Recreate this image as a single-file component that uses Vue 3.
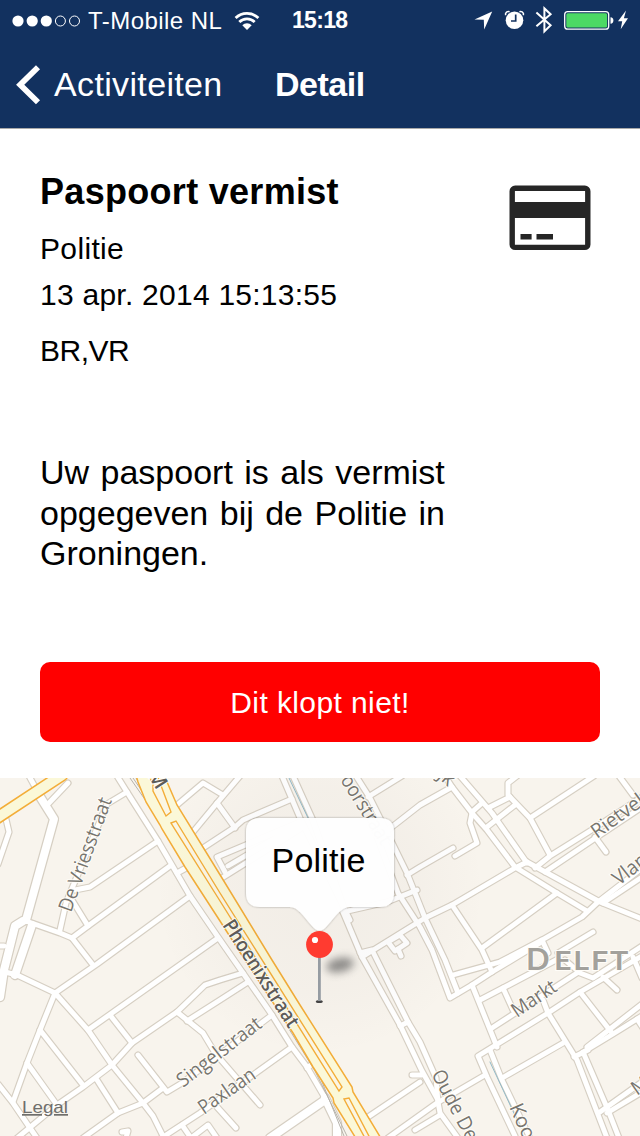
<script setup>
const wideRoads = [
  'M39 795L54 819L26 920',
  'M23 921L15 926L4 970L0 997',
  'M32 925L15 975',
  'M270 1138L325 1100',
  'M325 1098L337 1123V1140'
]

const roads = [
  'M29 776L40 796', 'M49 803L68 783', 'M5 815L9 832L-2 864', 'M-2 946H4',
  'M23 920L60 933L72 938L93 965', 'M72 938L88 926L170 866', 'M88 926L72 900',
  'M60 930L66 903L107 804L127 792', 'M75 890L90 887L158 841',
  'M117 776L127 792L158 841L190 896L218 937L243 973L272 1015L292 1047L307 1067L325 1098',
  'M177 873L188 867', 'M307 1068L315 1062',
  'M5 972L17 975L55 993L40 1030L27 1063L13 1102', 'M55 993L97 964L190 896',
  'M-2 1084L13 1103L30 1128L37 1138',
  'M16 1139L57 1105L83 1087L112 1065L132 1043L177 1012L205 985L220 980L243 973',
  'M55 993L88 1030L112 1065L143 1103L153 1116L164 1138',
  'M88 1030L218 938', 'M40 1030L83 1085', 'M27 1063L57 1105',
  'M110 1015L132 1043', 'M97 1080L118 1113', 'M83 1138L118 1113L143 1103L163 1088',
  'M138 1055L167 1092L182 1083L272 1015', 'M187 1021L220 1000L248 982',
  'M177 1012L203 1033L215 1053L260 1105', 'M160 1139L200 1113L292 1047',
  'M217 1107L236 1128', 'M182 1125L191 1138L208 1125L217 1138', 'M122 1132L128 1131L126 1138',
  'M177 805L203 783L223 795', 'M193 832L217 803L240 776', 'M217 803L235 828',
  'M203 848L235 827L243 820L292 799', 'M222 878L300 829', 'M300 822L217 857L225 872',
  'M228 866L300 824', 'M282 776L300 818L350 920', 'M293 776L312 818L343 905',
  'M343 912L362 957L400 1025L422 1071L438 1100',
  'M360 953L372 950L408 1022L420 1042L436 1078L438 1102L440 1113L458 1138', 'M400 1026L408 1022',
  'M368 1117L420 1082', 'M388 1138L437 1103L485 1075', 'M415 1130L440 1115', 'M412 1075H422',
  'M356 776L370 798L380 818L407 873L425 918L445 960L458 993',
  'M370 818L398 893L420 927L432 950L450 998L472 985L492 972L540 943',
  'M368 797L402 776', 'M388 830L420 805L452 787', 'M407 875L420 867L453 848',
  'M343 912L387 902L417 890', 'M362 957L425 918L452 905L515 868L527 862',
  'M388 942L400 935L407 943L395 951L388 942', 'M398 949L401 956',
  'M445 776L452 787L472 813L487 830L515 867', 'M460 776L492 813L527 863',
  'M472 812L481 804', 'M488 808L510 797', 'M487 827L515 805',
  'M517 776L508 783V795L530 818L550 855', 'M530 818L594 776',
  'M472 813L470 823L477 843L455 856', 'M535 868L550 856L590 831L642 797',
  'M545 872L597 837L642 807', 'M619 776L633 795', 'M595 837L606 852',
  'M527 862L600 902L642 919', 'M515 867L557 893L587 911', 'M557 893L482 948',
  'M452 905L482 950L492 972', 'M642 868L598 902L582 917L542 940L500 962L453 975',
  'M603 903L642 877', 'M542 940L548 953', 'M593 932L558 953',
  'M472 985L497 1047', 'M480 1000L503 988L558 959', 'M503 988L513 1010',
  'M492 1028L577 973', 'M515 1136L487 1077L478 1056L548 1013L580 992L642 956',
  'M490 1050L502 1080L530 1138', 'M502 1078L563 1043',
  'M543 1000L548 1013L577 1060L607 1138', 'M583 1052L608 1110L619 1138',
  'M574 1057L588 1050', 'M587 1047L642 1004', 'M585 1051L613 1034L642 1016',
  'M580 992L612 1033', 'M603 977L617 990', 'M565 960L580 973L593 978L642 946',
  'M633 957L642 978', 'M600 1112L642 1082', 'M607 1113L642 1092', 'M637 1019L643 1028'
]

const labels = [
  { t: 'De Vriesstraat', x: 71, y: 913, r: -70, w: 120 },
  { t: 'Singelstraat', x: 183, y: 1088, r: -37.5, w: 101 },
  { t: 'Paxlaan', x: 204, y: 1115, r: -35, w: 65 },
  { t: 'Rietveld', x: 597, y: 839, r: -36, w: 72 },
  { t: 'Vlam', x: 619, y: 886, r: -38, w: 44 },
  { t: 'Markt', x: 517, y: 1018, r: -34, w: 50 },
  { t: 'Oude De', x: 431, y: 1074, r: 62, w: 77 },
  { t: 'Koo', x: 509, y: 1107, r: 66, w: 37 },
  { t: 'M', x: 637, y: 1096, r: -35, w: 17 },
  { t: 'oorstraat', x: 340, y: 780, r: 58, w: 78 },
  { t: 'jk', x: 437, y: 777, r: 42, w: 15 }
]
</script>

<template>
  <main class="screen">
    <header class="top">
      <div class="status">
        <svg class="signal" width="70" height="14" viewBox="0 0 70 14">
          <g fill="#fff"><circle cx="6" cy="7" r="5.6" /><circle cx="20.2" cy="7" r="5.6" /><circle cx="34.3" cy="7" r="5.6" /></g>
          <g fill="none" stroke="#fff"><circle cx="48.4" cy="7" r="5" /><circle cx="62.5" cy="7" r="5" /></g>
        </svg>
        <span class="carrier">T-Mobile NL</span>
        <svg class="wifi" width="26" height="20" viewBox="0 0 26 20">
          <g fill="none" stroke="#fff" stroke-width="2.8">
            <path d="M1.6 7.1A16.2 16.2 0 0 1 24.4 7.1" />
            <path d="M5.3 11.1A10.8 10.8 0 0 1 20.7 11.1" />
          </g>
          <path d="M8.3 14.2A6.7 6.7 0 0 1 17.7 14.2L13 19Z" fill="#fff" />
        </svg>
        <span class="time">15:18</span>
        <svg class="indicators" width="158" height="30" viewBox="0 0 158 30">
          <path d="M.5 15.6L18.2 7.5L10.2 25.4L9.8 15.8Z" fill="#fff" />
          <circle cx="40.5" cy="16.3" r="8.8" fill="#fff" />
          <path d="M31.6 11.2V9.4Q33 7 35.6 7.7M49.4 11.2V9.4Q48 7 45.4 7.7" fill="none" stroke="#fff" stroke-width="1.5" />
          <path d="M41.7 10.6V17H37" fill="none" stroke="#12315f" stroke-width="1.7" />
          <path d="M62.4 8.6L76.6 21.2L70.4 27.4V4.4L76.6 10.2L62.4 22.2" fill="none" stroke="#fff" stroke-width="2" />
          <rect x="90.7" y="7.6" width="44" height="17.6" rx="3" fill="none" stroke="#fff" stroke-width="1.3" />
          <rect x="92.3" y="9.2" width="40.8" height="14.4" rx="1.5" fill="#4cd964" />
          <path d="M136.5 13.2Q139.4 13.4 139.4 16.4T136.5 19.8Z" fill="#fff" />
          <path d="M152 6.5L144 17.2H148.2L146.7 25.3L154 14.3H149.9Z" fill="#fff" />
        </svg>
      </div>
      <nav class="nav">
        <svg width="25" height="40" viewBox="0 0 25 40"><path d="M22 2.3L4.2 19.8L22 37.3" fill="none" stroke="#fff" stroke-width="5.8" /></svg>
        <span class="back">Activiteiten</span>
        <h1>Detail</h1>
      </nav>
    </header>

    <section class="content">
      <div class="summary">
        <div>
          <h2>Paspoort vermist</h2>
          <p class="org">Politie</p>
          <p class="date">13 apr. 2014 15:13:55</p>
          <p class="codes">BR,VR</p>
        </div>
        <svg class="card" width="82" height="66" viewBox="0 0 82 66">
          <rect x="3.2" y="3.2" width="75.6" height="59.2" rx="3" fill="#fff" stroke="#262626" stroke-width="5.4" />
          <path d="M3 17H79V33H3ZM11.5 49H22.6V54.6H11.5ZM27.5 49H44V54.6H27.5Z" fill="#262626" />
        </svg>
      </div>
      <p class="message">Uw paspoort is als vermist<br />opgegeven bij de Politie in<br />Groningen.</p>
      <button class="deny">Dit klopt niet!</button>
    </section>

    <section class="map">
      <svg width="640" height="358" viewBox="0 778 640 358">
        <defs>
          <radialGradient id="shade">
            <stop offset="0" stop-color="#544" stop-opacity=".04" />
            <stop offset=".6" stop-color="#544" stop-opacity=".025" />
            <stop offset="1" stop-color="#544" stop-opacity="0" />
          </radialGradient>
          <filter id="soft" x="-50%" y="-100%" width="200%" height="300%"><feGaussianBlur stdDeviation="4" /></filter>
          <filter id="edge" x="-10%" y="-10%" width="120%" height="130%"><feDropShadow dx="0" dy="0" stdDeviation=".8" flood-opacity=".35" /></filter>
        </defs>
        <rect y="778" width="640" height="358" fill="#f8f4ed" />

        <g fill="none" stroke-linecap="round" stroke-linejoin="round">
          <g stroke="#d6cfc3">
            <path v-for="d in wideRoads" :key="d" :d="d" stroke-width="10.4" />
            <path v-for="d in roads" :key="d" :d="d" stroke-width="7.2" />
          </g>
          <g stroke="#fff">
            <path v-for="d in wideRoads" :key="d" :d="d" stroke-width="8" />
            <path v-for="d in roads" :key="d" :d="d" stroke-width="4.9" />
          </g>
          <path d="M289 778L309 820M490 1062L519 1124" stroke="#91b9c8" stroke-width="1" />
          <path d="M130 778L146 801M133 778L146 797M136 778L145 793M289 1029L315 1071L347 1136M292 1029L318 1072L344 1136" stroke="#b7b3ab" stroke-width="1" />
          <path d="M-4 818.5L62 775" stroke="#f3ad38" stroke-width="13" />
          <path d="M-4 818.5L62 775" stroke="#fbf8d8" stroke-width="10" />
        </g>
        <path class="highway" d="M136 775L138 782L146 802L160 825L162 829L185 867L220 921L243 957L293 1033L313 1067L333 1098L334 1103L357 1140H382L353 1092L352 1087L300 1005L272 960L222 878L177 805L164 775Z" />
        <path class="median" d="M149 775L153 785L153 791L166 816L171 812L157 775ZM171 823L176 821L220 893L342 1087L339 1091L215 893ZM344 1099L349 1098L371 1140H366Z" />

        <g class="labels">
          <text v-for="l in labels" :key="l.t + l.x" :transform="`translate(${l.x} ${l.y}) rotate(${l.r})`" :textLength="l.w" lengthAdjust="spacingAndGlyphs">{{ l.t }}</text>
          <text class="major" transform="translate(222 925) rotate(57.3)" textLength="124" lengthAdjust="spacingAndGlyphs">Phoenixstraat</text>
          <text class="major" transform="translate(147 775) rotate(57.3)">M</text>
          <text class="city" x="526" y="970">D</text>
          <text class="city small" x="554" y="970" textLength="76" lengthAdjust="spacingAndGlyphs">ELFT</text>
        </g>
        <text class="legal" x="22" y="1113" textLength="46" lengthAdjust="spacingAndGlyphs">Legal</text>

        <circle cx="320" cy="890" r="165" fill="url(#shade)" />
        <ellipse cx="340" cy="965" rx="14" ry="7" transform="rotate(-12 340 965)" fill="#555" opacity=".65" filter="url(#soft)" />
        <ellipse cx="319.3" cy="1001.5" rx="3.5" ry="1.6" fill="#444" />
        <rect x="318" y="955" width="2.8" height="46" fill="#969ca2" />
        <path filter="url(#edge)" fill="#fff" fill-opacity=".975" d="M260 818H380Q394 818 394 832V893Q394 907 380 907H350C341 907 336 916 327 926Q319.5 935 312 926C303 916 298 907 290 907H260Q246 907 246 893V832Q246 818 260 818Z" />
        <text class="callout" x="271.5" y="872" textLength="94">Politie</text>
        <circle cx="319.5" cy="944.5" r="13.4" fill="#ff3b30" />
        <circle cx="315" cy="940" r="3.1" fill="#fff" />
      </svg>
    </section>
  </main>
</template>

<style>
body { margin: 0; }
</style>

<style scoped>
.screen { width: 640px; height: 1136px; overflow: hidden; background: #fff; color: #000; font-family: "Liberation Sans", Arial, sans-serif; }
.top { height: 129px; box-sizing: border-box; background: #12315f; color: #fff; border-bottom: 1px solid #a9a9a9; }
.status { display: flex; align-items: center; height: 41px; padding-left: 12px; white-space: nowrap; }
.signal { flex: none; }
.carrier { width: 146px; margin-left: 6px; font-size: 24px; letter-spacing: .45px; }
.wifi { flex: none; }
.time { width: 182px; margin-left: 32px; font-size: 23px; font-weight: bold; letter-spacing: -.7px; }
.indicators { flex: none; align-self: flex-start; margin-top: 4px; }
.nav { display: flex; align-items: center; height: 87px; padding-left: 16px; }
.back { width: 221px; margin-left: 13px; font-size: 34px; letter-spacing: .35px; }
h1, h2, p { margin: 0; font-weight: normal; }
h1 { font-size: 34px; font-weight: bold; letter-spacing: -.5px; }
.content { display: flex; flex-direction: column; box-sizing: border-box; height: 649px; padding: 40px 40px 36px; }
.summary { display: flex; justify-content: space-between; height: 283px; padding-right: 9px; }
.summary p { font-size: 30px; line-height: 46px; }
h2 { font-size: 36px; line-height: 46px; font-weight: bold; letter-spacing: .3px; }
.org { margin-top: 11px; letter-spacing: .35px; }
.date { letter-spacing: .25px; }
.summary .codes { margin-top: 10px; letter-spacing: -.5px; }
.card { margin-top: 16px; }
.message { font-size: 34px; line-height: 40.5px; word-spacing: 2px; }
.deny { height: 80px; margin-top: auto; padding: 2px 0 0; border: 0; border-radius: 10px; background: #f00; color: #fff; font: 30px "Liberation Sans", Arial, sans-serif; letter-spacing: .4px; }
.map svg { display: block; }
.highway { fill: #fbf8d8; stroke: #f3ad38; stroke-width: 1.5; }
.median { fill: #fbf6e4; stroke: #f3ad38; stroke-width: 1.4; }
.labels text { font: 20px "Open Sans", "Noto Sans", sans-serif; fill: #77756f; stroke: #fffdf8; stroke-width: 2px; paint-order: stroke; }
.labels .major { font-weight: 600; fill: #5d5c58; }
.labels .city { font-family: Lato, sans-serif; font-size: 31px; font-weight: bold; fill: #a3a19c; }
.labels .small { font-size: 26px; letter-spacing: 1.5px; }
.legal { font: 17px "Liberation Sans", Arial, sans-serif; fill: #6f6e6b; text-decoration: underline; }
.callout { font: 34px "Liberation Sans", Arial, sans-serif; }
</style>
